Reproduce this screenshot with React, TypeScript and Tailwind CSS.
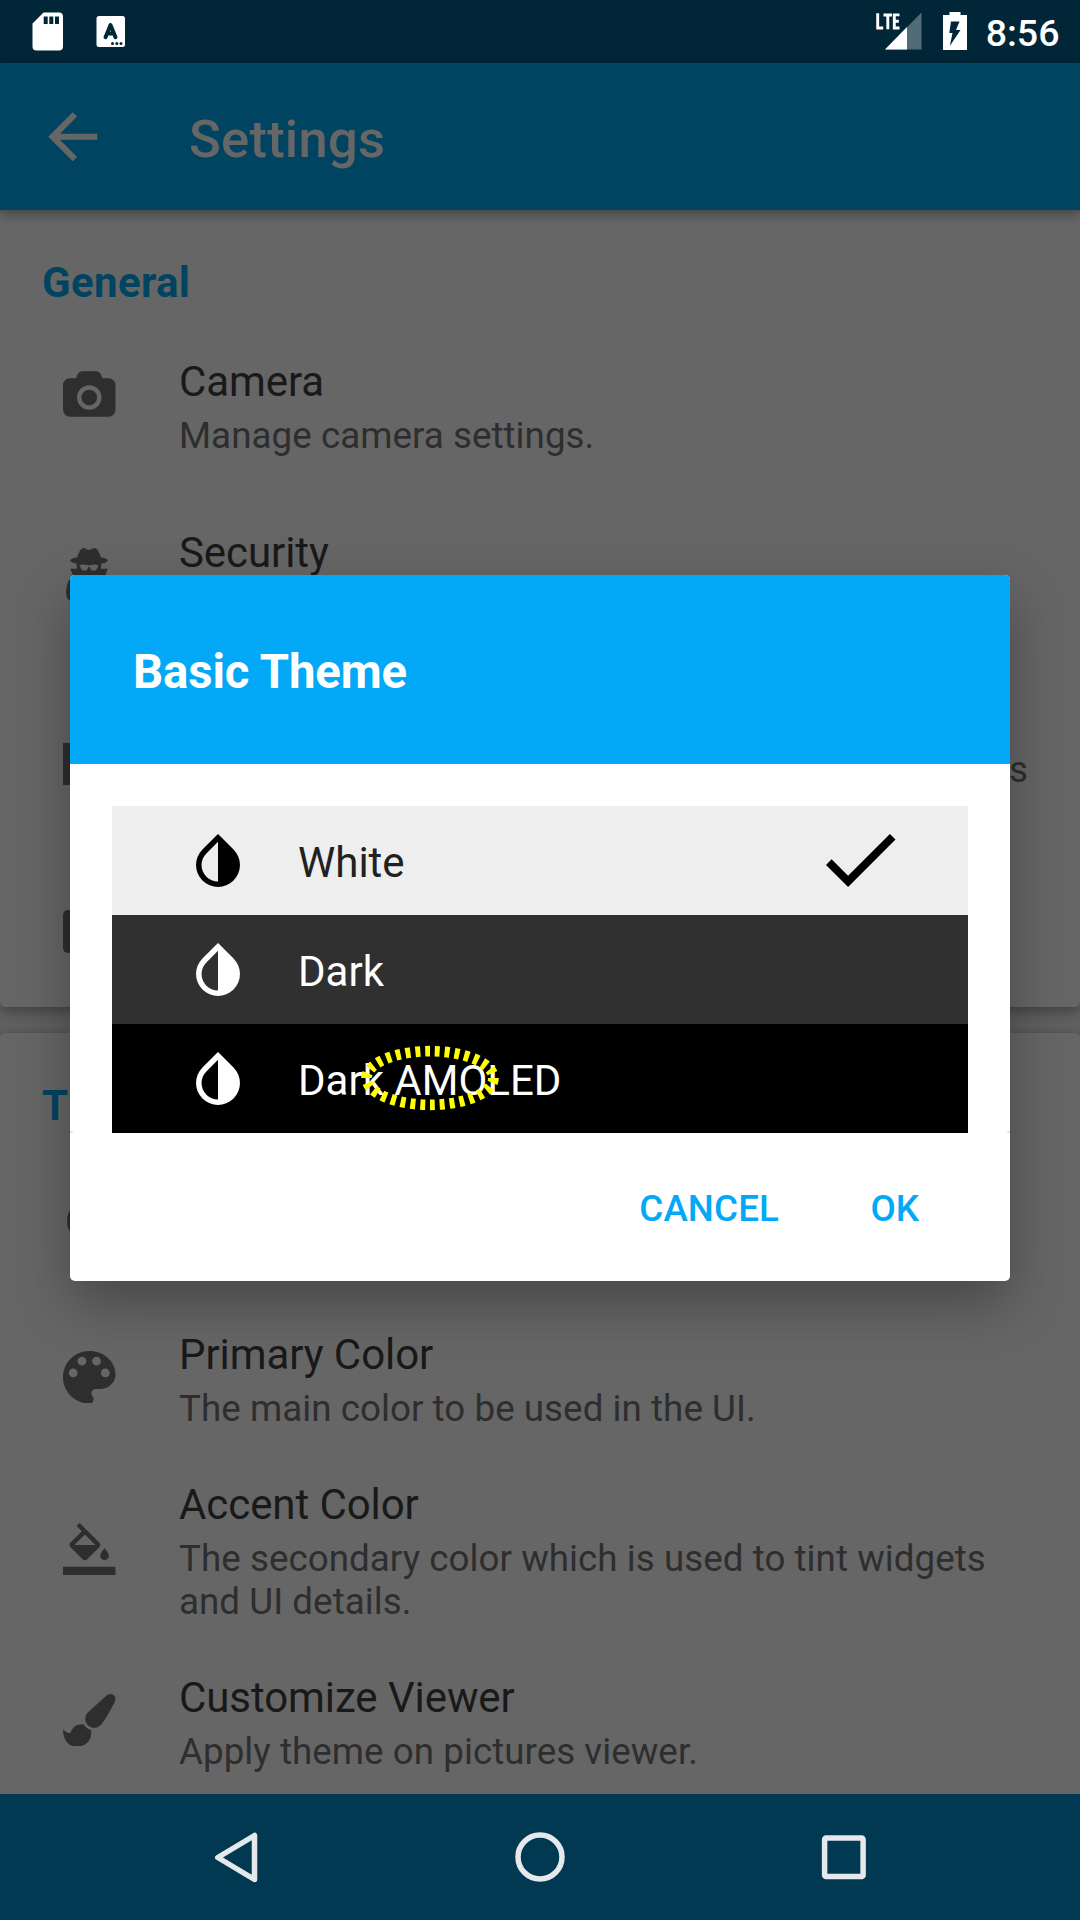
import React from "react";
import { MdArrowBack } from "react-icons/md";

const CAMERA =
  "M960 672q119 0 203.5 84.5t84.5 203.5-84.5 203.5-203.5 84.5-203.5-84.5-84.5-203.5 84.5-203.5 203.5-84.5zm704-416q106 0 181 75t75 181v896q0 106-75 181t-181 75h-1408q-106 0-181-75t-75-181v-896q0-106 75-181t181-75h224l51-136q19-49 69.5-84.5t103.5-35.5h512q53 0 103.5 35.5t69.5 84.5l51 136h224zm-704 1152q185 0 316.5-131.5t131.5-316.5-131.5-316.5-316.5-131.5-316.5 131.5-131.5 316.5 131.5 316.5 316.5 131.5z";
const SPY =
  "M704 1536l96-448-96-128-128-64zm256 0l128-640-128 64-96 128zm160-1010q-2-4-4-6-10-8-96-8-70 0-167 19-7 2-21 2t-21-2q-97-19-167-19-86 0-96 8-2 2-4 6 2 18 4 27 2 3 7.5 6.5t7.5 10.5q2 4 7.5 20.5t7 20.5 7.5 17 8.5 17 9 14 12 13.5 14 9.5 17.5 8 20.5 4 24.5 2q36 0 59-12.5t32.5-30 14.5-34.5 11.5-29.5 17.5-12.5h12q11 0 17.5 12.5t11.5 29.5 14.5 34.5 32.5 30 59 12.5q13 0 24.5-2t20.5-4 17.5-8 14-9.5 12-13.5 9-14 8.5-17 7.5-17 7-20.5 7.5-20.5q2-7 7.5-10.5t7.5-6.5q2-9 4-27zm416 879q0 121-73 190t-194 69h-874q-121 0-194-69t-73-190q0-61 4.5-118t19-125.5 37.5-123.5 63.5-103.5 93.5-74.5l-90-220h214q-22-64-22-128 0-12 2-32-194-40-194-96 0-57 210-99 17-62 51.5-134t70.5-114q32-37 76-37 30 0 84 31t84 31 84-31 84-31q44 0 76 37 36 42 70.5 114t51.5 134q210 42 210 99 0 56-194 96 7 81-20 160h214l-82 225q63 33 107.5 96.5t65.5 143.5 29 151.5 8 157.5z";
const BRUSH =
  "M1615 0q70 0 122.5 46.5t52.5 116.5q0 63-45 151-332 629-465 752-97 91-218 91-126 0-216.5-92.5t-90.5-219.5q0-128 92-212l638-579q59-54 130-54zm-909 1034q39 76 106.5 130t150.5 76l1 71q4 213-129.5 347t-348.5 134q-123 0-218-46.5t-152.5-127.5-86.5-183-29-220q7 5 41 30t62 44.5 59 36.5 46 17q41 0 55-37 25-66 57.5-112.5t69.5-76 88-47.5 103-25.5 125-10.5z";
const PALETTE =
  "M12 3c-4.97 0-9 4.03-9 9s4.03 9 9 9c.83 0 1.5-.67 1.5-1.5 0-.39-.15-.74-.39-1.01-.23-.26-.38-.61-.38-.99 0-.83.67-1.5 1.5-1.5H16c2.76 0 5-2.24 5-5 0-4.42-4.03-8-9-8zm-5.5 9c-.83 0-1.5-.67-1.5-1.5S5.67 9 6.5 9 8 9.67 8 10.5 7.33 12 6.5 12zm3-4C8.67 8 8 7.33 8 6.5S8.67 5 9.5 5s1.5.67 1.5 1.5S10.33 8 9.5 8zm5 0c-.83 0-1.5-.67-1.5-1.5S13.67 5 14.5 5s1.5.67 1.5 1.5S15.33 8 14.5 8zm3 4c-.83 0-1.5-.67-1.5-1.5S16.67 9 17.5 9s1.5.67 1.5 1.5-.67 1.5-1.5 1.5z";
const FILL =
  "M16.56 8.94L7.62 0 6.21 1.41l2.38 2.38-5.15 5.15c-.59.59-.59 1.54 0 2.12l5.5 5.5c.29.29.68.44 1.06.44s.77-.15 1.06-.44l5.5-5.5c.59-.58.59-1.53 0-2.12zM5.21 10L10 5.21 14.79 10H5.21zM19 11.5s-2 2.17-2 3.5c0 1.1.9 2 2 2s2-.9 2-2c0-1.33-2-3.5-2-3.5zM0 20h24v4H0z";
const INVERT =
  "M17.66 7.93L12 2.27 6.34 7.93c-3.12 3.12-3.12 8.19 0 11.31C7.9 20.8 9.95 21.58 12 21.58c2.05 0 4.1-.78 5.66-2.34 3.12-3.12 3.12-8.19 0-11.31zM12 19.59c-1.6 0-3.11-.62-4.24-1.76C6.62 16.69 6 15.19 6 13.59s.62-3.11 1.76-4.24L12 5.1v14.49z";

function Icon({ d, box, className }: { d: string; box: string; className: string }) {
  return (
    <svg viewBox={box} className={className} fill="currentColor" fillRule="evenodd">
      <path d={d} />
    </svg>
  );
}

function Row({
  icon,
  title,
  children,
  className,
}: {
  icon: React.ReactNode;
  title?: string;
  children?: React.ReactNode;
  className: string;
}) {
  return (
    <div className={`flex shrink-0 pl-[63px] ${className}`}>
      <div className="flex w-[52.5px] items-center justify-center self-stretch text-[#2e2e2e]">{icon}</div>
      <div className="ml-[63.5px] flex-1 pt-[25px]">
        <div className="h-[49px] text-[42px] leading-[49px] tracking-[-0.08px] text-[#191919]">{title}</div>
        <div className="mt-2 text-[36.75px] leading-[43px] tracking-[0.04px] text-[#2e2e2e]">{children}</div>
      </div>
    </div>
  );
}

function StatusBar() {
  return (
    <div className="flex h-[63px] shrink-0 items-center justify-between bg-[#002638] text-white">
      <svg className="h-[63px] w-[140px]" viewBox="0 0 140 63" fill="currentColor">
        <path
          fillRule="evenodd"
          d="M43.5 12.5H59q4 0 4 4V46.500q0 4-4 4H36.500q-4 0-4-4V23.500zM43.700 16.500V24h4V16.500zM49.300 16.500V24h4V16.500zM55 16.500V24h4V16.500z"
        />
        <rect x="96.500" y="16" width="28.500" height="31" rx="2.500" />
        <path
          d="M105.500 37.300L110.500 25L115.500 37.300M107.500 33.500H113.500"
          fill="none"
          stroke="#002638"
          strokeWidth="3.900"
          strokeLinecap="round"
          strokeLinejoin="round"
        />
        <g fill="#002638">
          <circle cx="112.500" cy="43.500" r="1.500" />
          <circle cx="116.800" cy="43.500" r="1.500" />
          <circle cx="121" cy="43.500" r="1.500" />
        </g>
      </svg>
      <div className="flex items-center pr-[20.5px]">
        <svg className="h-[63px] w-[112px]" viewBox="874 0 112 63" fill="currentColor">
          <path d="M921.500 12.500V49.500H885z" opacity="0.320" />
          <path d="M907 27V49.500H885z" />
          <path
            d="M877.700 13.300V28H883.200M883.500 15H892M887.800 15V29.300M899.500 14.900H894.300V28H899.500M894.300 21.300H898.800"
            fill="none"
            stroke="currentColor"
            strokeWidth="2.900"
          />
          <path
            fillRule="evenodd"
            d="M949.500 12H960.500V15H967V50H943V15H949.500zM951 21.500L949.300 33H952.500L949.800 46L960.500 30H956L959.500 21.500z"
          />
        </svg>
        <span className="mt-[3px] text-[37.5px] leading-[43px] font-medium">8:56</span>
      </div>
    </div>
  );
}

const THEMES = [
  { name: "White", row: "bg-[#eeeeee] text-[#212121]", icon: "text-black", checked: true, marked: false },
  { name: "Dark", row: "bg-[#303030] text-white", icon: "text-white", checked: false, marked: false },
  { name: "Dark AMOLED", row: "bg-black text-white", icon: "text-white", checked: false, marked: true },
];

function ThemeDialog() {
  return (
    <div className="absolute top-[575px] left-[70px] flex h-[706px] w-[940px] flex-col overflow-visible rounded-[5px] bg-white shadow-[0_22px_56px_rgba(0,0,0,0.31)]">
      <div className="flex h-[189px] shrink-0 items-center rounded-t-[5px] bg-[#03a9f7] pl-[63px] text-[47.25px] leading-[56px] font-bold tracking-[-0.1px] text-white">
        <span className="mt-[5px]">Basic Theme</span>
      </div>
      <div className="bg-[#dedede]">
        <div className="rounded-b-[5px] bg-white px-[42px] pt-[42px]">
          {THEMES.map((t) => (
            <div key={t.name} className={`relative flex h-[109px] items-center ${t.row}`}>
              <Icon d={INVERT} box="4 2.27 16 19.31" className={`ml-[84px] h-[53px] w-[44px] ${t.icon}`} />
              <span className="mt-[3px] ml-[58px] text-[42px] leading-[49px]">{t.name}</span>
              {t.checked && (
                <Icon
                  d="M9 16.17L4.83 12l-1.42 1.41L9 19 21 7l-1.41-1.41z"
                  box="3.41 5.59 17.59 13.41"
                  className="mr-[72.5px] ml-auto h-[53px] w-[69.5px] text-black"
                />
              )}
              {t.marked && (
                <svg className="absolute top-[20px] left-[247px] h-[68px] w-[142px]" viewBox="0 0 142 68" fill="none">
                  <ellipse
                    cx="71"
                    cy="34"
                    rx="63.5"
                    ry="26.8"
                    stroke="#ffff00"
                    strokeWidth="10.7"
                    pathLength="300"
                    strokeDasharray="5 5"
                  />
                </svg>
              )}
            </div>
          ))}
        </div>
      </div>
      <div className="flex flex-1 items-center justify-end gap-[91.5px] pt-[3px] pr-[91px] text-[36.75px] leading-[43px] font-medium text-[#03a9f7]">
        <span className="tracking-[0.1px]">CANCEL</span>
        <span>OK</span>
      </div>
    </div>
  );
}

export default function App() {
  return (
    <div
      className="relative flex h-[1920px] w-[1080px] flex-col overflow-hidden bg-[#5f5f5f]"
      style={{ fontFamily: "Roboto, sans-serif" }}
    >
      <StatusBar />
      <div className="z-10 flex h-[147px] shrink-0 items-center bg-[#014462] pl-[36px] text-[#666666] shadow-[0_4px_11px_rgba(0,0,0,0.35)]">
        <MdArrowBack size={73.5} />
        <span className="mt-[5px] ml-[79.5px] text-[52.5px] leading-[62px] font-medium tracking-[0.25px]">Settings</span>
      </div>

      <main className="flex h-[1584px] shrink-0 flex-col gap-[26px] overflow-hidden">
        <section className="flex h-[797px] shrink-0 flex-col rounded-[5px] bg-[#666666] pt-[48px] shadow-[0_5px_11px_rgba(0,0,0,0.28)]">
          <h2 className="pl-[42px] text-[42px] leading-[49px] font-bold tracking-[0.35px] text-[#014462]">General</h2>
          <Row
            className="mt-[25px] h-[171px]"
            icon={<Icon d={CAMERA} box="0 0 1920 1664" className="mb-[47px] h-[46px] w-[53px]" />}
            title="Camera"
          >
            Manage camera settings.
          </Row>
          <Row
            className="h-[171px]"
            icon={<Icon d={SPY} box="128 0 1408 1664" className="mb-[27px] h-[54px] w-[46px]" />}
            title="Security"
          />
          <Row className="h-[180px]" icon={<div className="h-[42px] w-[53px] bg-[#2e2e2e]" />}>
            <div className="-mt-2 pr-[52px] text-right">s</div>
          </Row>
          <Row className="h-[154px]" icon={<div className="h-[43px] w-[53px] rounded-[5px] bg-[#2e2e2e]" />} />
        </section>

        <section className="flex h-[780px] shrink-0 flex-col rounded-t-[5px] bg-[#666666] pt-[48px] shadow-[0_0_6px_rgba(0,0,0,0.2)]">
          <h2 className="pl-[42px] text-[42px] leading-[49px] font-bold text-[#014462]">Theme</h2>
          <Row
            className="mt-[25px] h-[150px]"
            icon={<Icon d={INVERT} box="4 2.27 16 19.31" className="mb-[27px] h-[53px] w-[44px]" />}
          />
          <Row
            className="h-[150px]"
            icon={<Icon d={PALETTE} box="3 3 18 18" className="mb-[6px] size-[52.5px]" />}
            title="Primary Color"
          >
            The main color to be used in the UI.
          </Row>
          <Row
            className="h-[193px]"
            icon={<Icon d={FILL} box="0 0 24 24" className="mb-[5px] size-[52.5px]" />}
            title="Accent Color"
          >
            The secondary color which is used to tint widgets
            <br />
            and UI details.
          </Row>
          <Row
            className="h-[150px]"
            icon={<Icon d={BRUSH} box="0 0 1792 1792" className="mb-[6px] size-[52.5px]" />}
            title="Customize Viewer"
          >
            Apply theme on pictures viewer.
          </Row>
        </section>
      </main>

      <nav className="z-10 flex h-[126px] shrink-0 items-center bg-[#013852]">
        <svg className="h-[126px] w-[1080px]" viewBox="0 0 1080 126" fill="none" stroke="#e5e9ec" strokeWidth="5.500">
          <path d="M217.800 63.500L254.500 41.500V85.500z" strokeLinejoin="round" />
          <circle cx="540" cy="63" r="22" />
          <rect x="824.600" y="44" width="38.500" height="38.500" rx="1.500" />
        </svg>
      </nav>

      <ThemeDialog />
    </div>
  );
}
